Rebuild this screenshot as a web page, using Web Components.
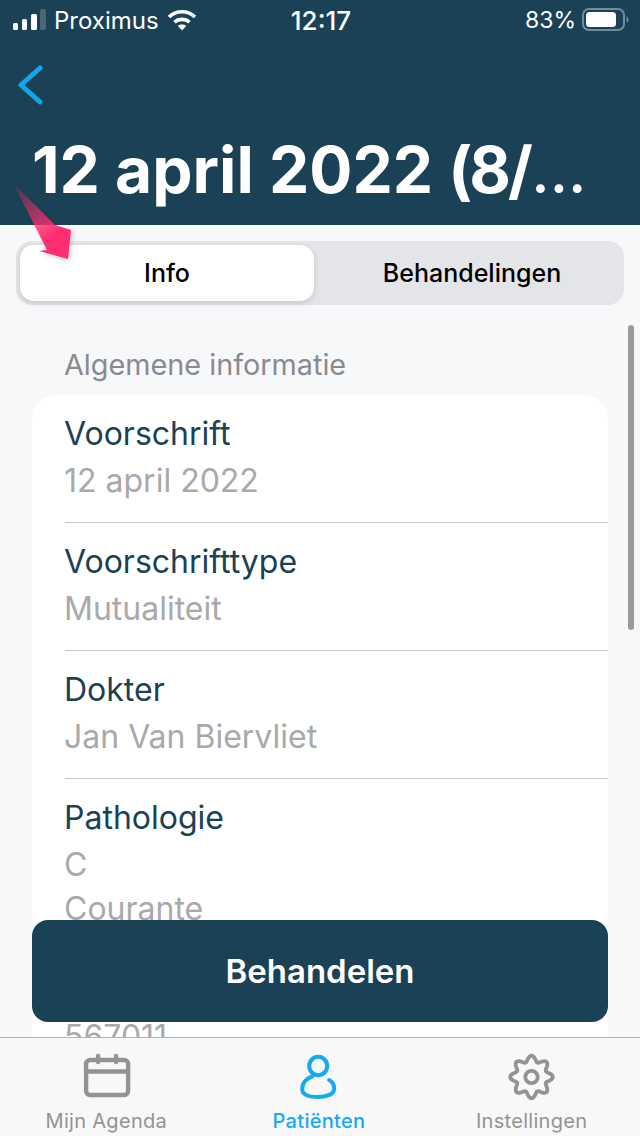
<!DOCTYPE html>
<html lang="nl">
<head>
<meta charset="utf-8">
<title>Voorschrift</title>
<style>
    html, body { margin: 0; padding: 0; }
    body { font-family: Inter, "Liberation Sans", sans-serif; }
</style>
</head>
<body>
<app-screen>
    <status-bar slot="top"></status-bar>
    <nav-header slot="top">12 april 2022 <span slot="tail">(8/</span></nav-header>
    <segmented-control slot="top">
        <seg-item selected>Info</seg-item>
        <seg-item>Behandelingen</seg-item>
    </segmented-control>
    <info-section heading="Algemene informatie">
        <info-row label="Voorschrift">12 april 2022</info-row>
        <info-row label="Voorschrifttype">Mutualiteit</info-row>
        <info-row label="Dokter">Jan Van Biervliet</info-row>
        <info-row label="Pathologie">C<br>Courante</info-row>
        <info-row label="&nbsp;">567011</info-row>
    </info-section>
    <action-button slot="overlay">Behandelen</action-button>
    <tab-bar slot="bottom">
        <tab-item icon="agenda">Mijn Agenda</tab-item>
        <tab-item icon="patients" active>Patiënten</tab-item>
        <tab-item icon="settings">Instellingen</tab-item>
    </tab-bar>
</app-screen>

<script>
class AppScreen extends HTMLElement {
    constructor() {
        super();
        this.attachShadow({ mode: "open" });
        this.shadowRoot.innerHTML = `
            <style>
                :host {
                    display: flex;
                    flex-direction: column;
                    position: relative;
                    width: 640px;
                    height: 1136px;
                    overflow: hidden;
                    background: #f7f8fa;
                }
                .scroll { flex: 1; min-height: 0; overflow: hidden; }
                .thumb {
                    position: absolute;
                    left: 628px;
                    top: 325px;
                    width: 6px;
                    height: 305px;
                    border-radius: 3px;
                    background: #9b9b9b;
                }
                .pointer { position: absolute; left: 0; top: 170px; width: 90px; height: 100px; }
            </style>
            <slot name="top"></slot>
            <div class="scroll"><slot></slot></div>
            <slot name="bottom"></slot>
            <slot name="overlay"></slot>
            <div class="thumb"></div>
            <svg class="pointer" viewBox="0 170 90 100">
                <defs>
                    <linearGradient id="arrow" gradientUnits="userSpaceOnUse" x1="13" y1="183" x2="66" y2="255">
                        <stop offset="0" stop-color="#ff2d70" stop-opacity=".1"/>
                        <stop offset=".35" stop-color="#ff2d70" stop-opacity=".5"/>
                        <stop offset=".75" stop-color="#ff2d70"/>
                    </linearGradient>
                    <filter id="soft" x="-30%" y="-30%" width="160%" height="160%">
                        <feDropShadow dx="2" dy="2" stdDeviation="2" flood-color="#000" flood-opacity=".18"/>
                    </filter>
                </defs>
                <path d="M13 183 L55 225 L71 230 L68 259 L39 251 L47 250 Z" fill="url(#arrow)" filter="url(#soft)"/>
            </svg>
        `;
    }
}

class StatusBar extends HTMLElement {
    constructor() {
        super();
        this.attachShadow({ mode: "open" });
        this.shadowRoot.innerHTML = `
            <style>
                :host {
                    display: grid;
                    grid-template-columns: 1fr auto 1fr;
                    align-items: center;
                    height: 40px;
                    padding: 0 11px 0 13px;
                    background: #1a4155;
                    color: #fff;
                    font: 400 24px Inter, "Liberation Sans", sans-serif;
                }
                .left, .right { display: flex; align-items: center; }
                .right { justify-content: flex-end; font-size: 23px; }
                .carrier { margin: 0 0 0 8px; }
                .wifi { margin-left: 8px; }
                .time { font-size: 26px; font-weight: 500; }
                .battery { margin-left: 6px; }
                svg { display: block; }
            </style>
            <div class="left">
                <svg width="33" height="22" viewBox="0 0 33 22">
                    <rect x="0" y="14" width="5" height="7" rx="1.5" fill="#fff"/>
                    <rect x="9" y="10" width="5" height="11" rx="1.5" fill="#fff"/>
                    <rect x="18" y="5" width="6" height="16" rx="1.5" fill="#fff"/>
                    <rect x="27" y="0" width="6" height="21" rx="1.5" fill="#fff" opacity=".2"/>
                </svg>
                <span class="carrier">Proximus</span>
                <svg class="wifi" width="30" height="22" viewBox="0 0 30 22" fill="none" stroke="#fff" stroke-width="3.6">
                    <path d="M2 8 C9 1 21 1 28 8"/>
                    <path d="M7.5 13.2 C11.5 9.4 18.5 9.4 22.5 13.2"/>
                    <path d="M15 21.5 L10.8 17 C13 15.1 17 15.1 19.2 17 Z" fill="#fff" stroke="none"/>
                </svg>
            </div>
            <div class="time">12:17</div>
            <div class="right">
                <span>83%</span>
                <svg class="battery" width="47" height="24" viewBox="0 0 47 24">
                    <rect x="1" y="1" width="41" height="21" rx="6" fill="none" stroke="#6f8d9c" stroke-width="2"/>
                    <rect x="4" y="4" width="30" height="15" rx="3.5" fill="#fff"/>
                    <path d="M44.5 8.5 C46 9 46.5 10 46.5 11.5 C46.5 13 46 14 44.5 14.5 Z" fill="#6f8d9c"/>
                </svg>
            </div>
        `;
    }
}

class NavHeader extends HTMLElement {
    constructor() {
        super();
        this.attachShadow({ mode: "open" });
        this.shadowRoot.innerHTML = `
            <style>
                :host {
                    display: block;
                    height: 185px;
                    padding: 25px 0 0 17px;
                    box-sizing: border-box;
                    background: #1a4155;
                    color: #fff;
                }
                svg { display: block; }
                h1 {
                    margin: 27px 0 0 15px;
                    font: 700 64px/76px Inter, "Liberation Sans", sans-serif;
                    white-space: nowrap;
                }
                .tail { letter-spacing: -3px; }
                .dots { margin-left: 2px; font-size: 52px; letter-spacing: 1px; }
            </style>
            <svg width="28" height="40" viewBox="0 0 28 40" fill="none">
                <path d="M23 3 L4 20 L23 37" stroke="#12a5ec" stroke-width="5" stroke-linecap="round" stroke-linejoin="round"/>
            </svg>
            <h1><slot></slot><span class="tail"><slot name="tail"></slot></span><span class="dots">...</span></h1>
        `;
    }
}

class SegmentedControl extends HTMLElement {
    constructor() {
        super();
        this.attachShadow({ mode: "open" });
        this.shadowRoot.innerHTML = `
            <style>
                :host {
                    display: flex;
                    height: 64px;
                    box-sizing: border-box;
                    margin: 16px 16px 0;
                    padding: 4px;
                    border-radius: 16px;
                    background: #e4e5e8;
                }
            </style>
            <slot></slot>
        `;
    }
}

class SegItem extends HTMLElement {
    constructor() {
        super();
        this.attachShadow({ mode: "open" });
        this.shadowRoot.innerHTML = `
            <style>
                :host {
                    flex: 1;
                    display: flex;
                    align-items: center;
                    justify-content: center;
                    padding-left: 10px;
                    border-radius: 14px;
                    color: #000;
                    font: 500 25px Inter, "Liberation Sans", sans-serif;
                }
                :host([selected]) {
                    flex: 0 0 294px;
                    padding-left: 0;
                    background: #fff;
                    box-shadow: 0 2px 6px rgba(0, 0, 0, .14);
                }
            </style>
            <slot></slot>
        `;
    }
}

class InfoSection extends HTMLElement {
    constructor() {
        super();
        this.attachShadow({ mode: "open" });
        this.shadowRoot.innerHTML = `
            <style>
                :host { display: block; padding: 42px 32px 0; }
                h2 {
                    margin: 0 0 12px 32px;
                    color: #8a8a8e;
                    font: 400 28.8px/36px Inter, "Liberation Sans", sans-serif;
                }
                .card { background: #fff; border-radius: 24px 24px 0 0; }
            </style>
            <h2></h2>
            <div class="card"><slot></slot></div>
        `;
    }

    connectedCallback() {
        this.shadowRoot.querySelector("h2").textContent = this.getAttribute("heading");
    }
}

class InfoRow extends HTMLElement {
    constructor() {
        super();
        this.attachShadow({ mode: "open" });
        this.shadowRoot.innerHTML = `
            <style>
                :host { display: block; padding-left: 33px; }
                .inner { padding: 17px 0 19px; border-bottom: 1px solid #c8c8c8; }
                :host(:last-child) .inner { border-bottom: 0; }
                .label { margin-left: -1px; color: #1a4155; font: 400 32px/44px Inter, "Liberation Sans", sans-serif; }
                .value { margin: 3px 0 0 -1px; color: #a9a9ac; font: 400 32px/44px Inter, "Liberation Sans", sans-serif; }
            </style>
            <div class="inner">
                <div class="label"></div>
                <div class="value"><slot></slot></div>
            </div>
        `;
    }

    connectedCallback() {
        this.shadowRoot.querySelector(".label").textContent = this.getAttribute("label");
    }
}

class ActionButton extends HTMLElement {
    constructor() {
        super();
        this.attachShadow({ mode: "open" });
        this.shadowRoot.innerHTML = `
            <style>
                :host {
                    position: absolute;
                    left: 32px;
                    right: 32px;
                    bottom: 114px;
                    height: 102px;
                    display: flex;
                    align-items: center;
                    justify-content: center;
                    border-radius: 16px;
                    background: #1a4155;
                    color: #fff;
                    font: 600 33px Inter, "Liberation Sans", sans-serif;
                }
            </style>
            <slot></slot>
        `;
    }
}

class TabBar extends HTMLElement {
    constructor() {
        super();
        this.attachShadow({ mode: "open" });
        this.shadowRoot.innerHTML = `
            <style>
                :host {
                    display: grid;
                    grid-template-columns: 1fr 1fr 1fr;
                    height: 99px;
                    box-sizing: border-box;
                    padding-right: 2px;
                    border-top: 1px solid #b2b2b2;
                    background: #f8f8f8;
                }
            </style>
            <slot></slot>
        `;
    }
}

function gearPath(cx, cy) {
    let d = "";
    for (let i = 0; i < 160; i++) {
        const a = (i / 160) * Math.PI * 2;
        const r = 18.4 + 2.9 * Math.cos(8 * a);
        const x = cx + r * Math.sin(a);
        const y = cy - r * Math.cos(a);
        d += (i ? "L" : "M") + x.toFixed(2) + " " + y.toFixed(2);
    }
    return d + "Z";
}

const TAB_ICONS = {
    agenda: `
        <g stroke-width="4.4">
            <rect x="7.1" y="8" width="42" height="35" rx="4"/>
            <path d="M7.1 19.5 H49.1"/>
            <path d="M19.1 4 V10 M37.1 4 V10"/>
        </g>`,
    patients: `
        <g stroke-width="4">
            <ellipse cx="27.2" cy="14" rx="9" ry="9.2"/>
            <path d="M38.2 28 C41.7 30 43.2 34 43.2 37 C43.2 42 35.7 45 26.7 45 C17.7 45 11.2 43 11.2 37 C11.2 31 15.7 26 21.2 24.5"/>
        </g>`,
    settings: `
        <g stroke-width="3.8">
            <path d="${gearPath(27.5, 25)}"/>
            <circle cx="27.5" cy="25" r="6.2"/>
        </g>`
};

class TabItem extends HTMLElement {
    constructor() {
        super();
        this.attachShadow({ mode: "open" });
        this.shadowRoot.innerHTML = `
            <style>
                :host {
                    display: flex;
                    flex-direction: column;
                    align-items: center;
                    padding-top: 14px;
                    color: #939395;
                    font: 400 20px/26px Inter, "Liberation Sans", sans-serif;
                    letter-spacing: .3px;
                }
                :host([active]) { color: #17aaf0; font-weight: 500; }
                svg {
                    display: block;
                    width: 55px;
                    height: 52px;
                    fill: none;
                    stroke: currentColor;
                    stroke-linecap: round;
                    stroke-linejoin: round;
                }
                .label { margin-top: 4px; }
            </style>
            <svg viewBox="0 0 55 52"></svg>
            <div class="label"><slot></slot></div>
        `;
    }

    connectedCallback() {
        this.shadowRoot.querySelector("svg").innerHTML = TAB_ICONS[this.getAttribute("icon")];
    }
}

customElements.define("app-screen", AppScreen);
customElements.define("status-bar", StatusBar);
customElements.define("nav-header", NavHeader);
customElements.define("segmented-control", SegmentedControl);
customElements.define("seg-item", SegItem);
customElements.define("info-section", InfoSection);
customElements.define("info-row", InfoRow);
customElements.define("action-button", ActionButton);
customElements.define("tab-bar", TabBar);
customElements.define("tab-item", TabItem);
</script>
</body>
</html>
